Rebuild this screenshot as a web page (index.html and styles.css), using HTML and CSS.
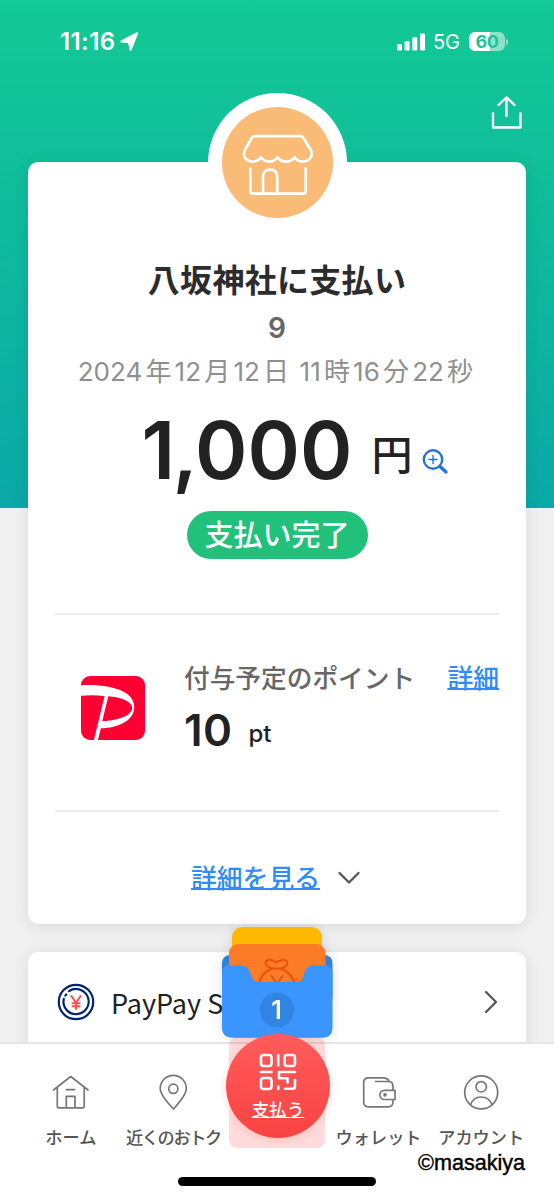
FILE: index.html
```html
<!DOCTYPE html>
<html lang="ja">
<head>
<meta charset="utf-8">
<title>支払い完了</title>
<link rel="stylesheet" href="styles.css">
</head>
<body>
<div class="app">
  <header class="status">
    <div class="status-left">
      <span class="time">11:16</span>
      <svg class="loc" width="19" height="20" viewBox="0 0 19 20"><path d="M17.2 1.2 L10.6 18 L9.2 11.2 Q9 10.4 8.200 10.300 L1.400 9.500 Z" fill="#fff" stroke="#fff" stroke-width="2" stroke-linejoin="round"/></svg>
    </div>
    <div class="status-right">
      <svg width="28" height="18" viewBox="0 0 28 18" fill="#fff"><rect x="0" y="11" width="5" height="6.500" rx="1.300"/><rect x="7.600" y="8" width="5" height="9.500" rx="1.300"/><rect x="15.300" y="4.200" width="5" height="13.300" rx="1.300"/><rect x="23" y="0.500" width="5" height="17" rx="1.300"/></svg>
      <span class="net">5G</span>
      <span class="battery"><span class="level">60</span></span>
      <span class="nub"></span>
    </div>
  </header>
  <div class="toolbar">
    <svg width="34" height="38" viewBox="489 94 34 38" fill="none" stroke="#fff" stroke-width="2.300" stroke-linecap="round" stroke-linejoin="round"><path d="M493 113.500V127.500H520.500V113.500M506.500 116V97.500M498.500 105L506.500 97.200L514.500 105"/></svg>
  </div>
  <main>
    <section class="card receipt">
      <div class="avatar">
        <svg width="111" height="111" viewBox="222 107 111 111" fill="none" stroke="#fff" stroke-width="2.700" stroke-linecap="round" stroke-linejoin="round">
          <circle cx="277.500" cy="162.500" r="55.500" fill="#f9bb76" stroke="none"/>
          <path d="M255 136.200H300.500Q302.300 136.200 303.200 137.800L310.500 149.500Q313.500 155 309.500 159Q306 162 301.500 161.500Q296.500 161 294.500 157.200Q291.500 161.600 286 161.600Q280.500 161.600 277.500 157.200Q274.500 161.600 269 161.600Q264 161.600 261 157.200Q258.500 161 253.500 161.500Q248 161.800 245.500 158.500Q242.500 154.500 245.200 149.500L251.800 137.800Q252.700 136.200 255 136.200Z"/>
          <path d="M250.300 168.500V191Q250.300 193.700 253 193.700H303Q305.700 193.700 305.700 191V168.500M263 193.500V177Q263 169.700 270 169.700Q277.200 169.700 277.200 177V193.500"/>
        </svg>
      </div>
      <h1 class="title">八坂神社に支払い</h1>
      <p class="serial">9</p>
      <p class="date">2024<span class="unit">年</span>12<span class="unit">月</span>12<span class="unit">日</span> 11<span class="unit">時</span>16<span class="unit">分</span>22<span class="unit">秒</span></p>
      <div class="amount">
        <span class="number"><span class="thousands">1,</span>000</span><span class="yen">円</span>
        <svg class="zoom" width="27" height="27" viewBox="0 0 27 27" fill="none" stroke="#2474d8" stroke-linecap="round"><circle cx="11" cy="11.500" r="9.200" stroke-width="2.400"/><path d="M18 18.500L24 24" stroke-width="3.300"/><path d="M11 7.500V15.500M7 11.500H15" stroke-width="1.400"/></svg>
      </div>
      <div class="pill">支払い完了</div>
      <div class="points">
        <svg class="paypay" width="64" height="64" viewBox="35 48 190 190">
          <rect x="35" y="48" width="190" height="190" rx="27" fill="#ff0033"/>
          <path fill="#fff" fill-rule="evenodd" d="M34 76C95 70 196 84 193 142C191 181 145 202 94 203L85 239H73L105 108Q70 103 34 107ZM116 108L98 182C142 181 186 166 187 143C187 123 151 110 116 108Z"/>
        </svg>
        <div class="points-body">
          <div class="points-head"><span class="points-label">付与予定のポイント</span><a class="link">詳細</a></div>
          <div class="points-value"><span class="points-number">10</span><span class="points-unit">pt</span></div>
        </div>
      </div>
      <div class="more">
        <a class="link">詳細を見る</a>
        <svg class="chevron" width="24" height="14" viewBox="0 0 24 14" fill="none" stroke="#555" stroke-width="2.300" stroke-linecap="round" stroke-linejoin="round"><path d="M2.500 2L12 11.500L21.500 2"/></svg>
      </div>
    </section>
    <section class="card step">
      <svg width="38" height="38" viewBox="0 0 38 38" fill="none" stroke="#002474" stroke-width="2.200">
        <circle cx="19" cy="19" r="17.200"/>
        <path d="M12 8.200A12.600 12.600 0 1 1 6.800 15.800" stroke-linecap="round"/><path d="M8.300 12.600L9.200 11.500" stroke-linecap="round"/>
        <path d="M14.400 13L19 19.700L23.600 13M19 19.700V26M15.500 20.300H22.500M15.500 23.200H22.500" stroke="#ff5055" stroke-width="2" stroke-linecap="round"/>
      </svg>
      <span class="step-label">PayPay S</span>
      <svg class="go" width="14" height="24" viewBox="0 0 14 24" fill="none" stroke="#555" stroke-width="2.300" stroke-linecap="round" stroke-linejoin="round"><path d="M2 2L12 12L2 22"/></svg>
    </section>
  </main>
  <nav class="tabs">
    <a class="tab">
      <svg width="38" height="36" viewBox="52 1073 38 36"><path d="M53.500 1089L70.700 1075.500L88 1089M57.300 1086.500V1105Q57.300 1106.800 59 1106.800H82.500Q84.200 1106.800 84.200 1105V1086.500M66.300 1106.500V1095.300H75V1106.500M66.500 1088.700H74.500"/></svg>
      <span class="tab-label">ホーム</span>
    </a>
    <a class="tab">
      <svg width="38" height="36" viewBox="154.500 1073 38 36"><path d="M174 1108Q160.700 1094 160.700 1087.500A12.900 12.900 0 0 1 186.800 1087.500Q186.800 1094 174 1108Z"/><circle cx="173.800" cy="1087.800" r="4.600"/></svg>
      <span class="tab-label tight">近くのおトク</span>
    </a>
    <div class="tab"></div>
    <a class="tab">
      <svg width="38" height="36" viewBox="360 1073 38 36"><path d="M393 1088.500V1086Q393 1080.500 389 1080.500H375.500M389.300 1080.500Q387.500 1076.800 383.500 1076.800H368.500Q363.700 1076.800 363.700 1081.500V1101Q363.700 1105.800 368.500 1105.800H388Q393 1105.800 393 1101V1098.500M395 1089.300H384.500A4.600 4.600 0 0 0 384.500 1098.500H395Z"/><circle cx="385" cy="1093.800" r="1" fill="#777"/></svg>
      <span class="tab-label">ウォレット</span>
    </a>
    <a class="tab">
      <svg width="38" height="36" viewBox="462 1073 38 36"><circle cx="481.200" cy="1091.400" r="16.500"/><circle cx="481.200" cy="1085.800" r="5.200"/><path d="M470.500 1103.700Q473.500 1096 481.200 1096Q489 1096 492 1103.700"/></svg>
      <span class="tab-label">アカウント</span>
    </a>
  </nav>
  <svg class="folder" width="112" height="114" viewBox="221 926 112 114">
    <rect x="222" y="955" width="110.500" height="50" rx="8" fill="#2f82dc"/>
    <rect x="232" y="927" width="90" height="50" rx="10" fill="#ffb800"/>
    <rect x="229" y="944" width="96.500" height="50" rx="9" fill="#fb7b26"/>
    <g fill="none" stroke="#e95309" stroke-width="2" stroke-linecap="round" stroke-linejoin="round"><path d="M271 968.500Q264 965 266 961.500Q269 957.500 276.500 962.500Q284 957.500 287 961.500Q289 965 282 968.500Z"/><path d="M272 968.500Q261 973 258.500 984M281 968.500Q292 973 295 984M271.500 976L277 983.500L282.500 976"/></g>
    <path d="M222 973Q222 965.500 228 965.500H241Q247 965.500 249 970L252.500 978.500Q254 982 258 982H297Q301 982 302.500 978.500L305.500 970Q307.500 965.500 313 965.500H326Q332.500 965.500 332.500 973V1027Q332.500 1037.700 322 1037.700H232.500Q222 1037.700 222 1027Z" fill="#3b95fe"/>
    <circle cx="277" cy="1010" r="17.200" fill="#3085e3"/>
    <text class="folder-count" x="276.500" y="1018.500">1</text>
  </svg>
  <div class="pay-halo"></div>
  <a class="pay">
    <svg width="38" height="38" viewBox="258.500 1053 38 38" fill="none" stroke="#fff" stroke-width="2.600" stroke-linejoin="round" stroke-linecap="round">
      <rect x="260.500" y="1055" width="10.500" height="11" rx="2.500"/><path d="M277.700 1055V1065.500"/><rect x="284" y="1055" width="10.500" height="11" rx="2.500"/>
      <path d="M260.500 1072H271"/><rect x="260.500" y="1078" width="10.500" height="11" rx="2.500"/>
      <path d="M294.500 1072H278.500V1078.200H287V1082.500M277.700 1086.500V1089M294.500 1080V1086.500Q294.500 1088.700 292 1088.700H284.500"/>
    </svg>
    <span class="pay-label">支払う</span>
  </a>
  <div class="home-bar"></div>
  <div class="credit">©masakiya</div>
</div>
</body>
</html>
```
FILE: styles.css
```css
* { box-sizing: border-box; }
body { margin: 0; font-family: Inter, "Noto Sans CJK JP", sans-serif; }
h1, p { margin: 0; }
svg { display: block; flex: none; }

.app {
  position: relative;
  display: flex;
  flex-direction: column;
  width: 554px;
  height: 1200px;
  overflow: hidden;
  background: #f0f0f0 linear-gradient(#13c994, #0ba8a7) no-repeat 0 0 / 100% 508px;
}

.status {
  display: flex;
  justify-content: space-between;
  height: 84px;
  padding: 0 46px 0 60px;
  color: #fff;
}
.status-left, .status-right { display: flex; align-items: center; height: 83px; }
.time { font-size: 24px; font-weight: 600; letter-spacing: 0.4px; }
.loc { margin-left: 5px; }
.net { margin-left: 8px; font-size: 20px; }
.battery {
  display: flex;
  justify-content: center;
  align-items: center;
  width: 36px;
  height: 19px;
  margin-left: 9px;
  border-radius: 6px;
  background: linear-gradient(90deg, #fff 21px, #8fe2ca 21px);
}
.level { color: #1fc39a; font-size: 18px; font-weight: 700; letter-spacing: -0.5px; }
.nub { width: 2px; height: 6px; margin-left: 1px; border-radius: 0 2px 2px 0; background: #8fe2ca; }

.toolbar { display: flex; justify-content: flex-end; height: 78px; padding: 10px 31px 0 0; }

main { display: flex; flex-direction: column; gap: 28px; padding: 0 28px; }
.card { border-radius: 10px; background: #fff; box-shadow: 0 2px 16px rgba(0, 0, 0, 0.09); }

.receipt { display: flex; flex-direction: column; align-items: center; height: 762px; }
.avatar {
  flex: none;
  width: 139px;
  height: 139px;
  margin-top: -69px;
  padding: 14px;
  border-radius: 50%;
  background: #fff;
}
.title {
  height: 48px;
  margin-top: 25px;
  color: #2c2c2e;
  font-size: 32px;
  font-weight: 700;
  line-height: 48px;
  letter-spacing: 0.3px;
}
.serial { height: 36px; margin-top: 5px; color: #666; font-size: 28px; font-weight: 600; line-height: 36px; }
.date {
  height: 40px;
  margin-top: 6px;
  color: #8f8f8f;
  font-size: 26px;
  font-weight: 400;
  line-height: 40px;
  white-space: nowrap;
}
.unit { margin: 0 3.2px; }
.amount { display: flex; align-items: flex-start; height: 94px; margin-top: 11px; margin-left: 37px; color: #222; }
.number { font-size: 79.5px; font-weight: 600; line-height: 94px; }
.thousands { letter-spacing: -2.7px; }
.yen { margin: 27px 0 0 19px; font-size: 41px; font-weight: 500; line-height: 50px; }
.zoom { margin: 45px 0 0 10px; }
.pill {
  width: 181px;
  height: 48px;
  margin-top: 14px;
  border-radius: 24px;
  background: #22c17b;
  color: #fff;
  font-size: 29px;
  font-weight: 500;
  line-height: 49px;
  text-align: center;
}
.points {
  display: flex;
  align-items: center;
  width: 444px;
  height: 199px;
  margin-top: 54px;
  padding-left: 26px;
  border-top: 2px solid #ededed;
  border-bottom: 2px solid #ededed;
}
.paypay { margin-bottom: 9px; }
.points-body { flex: 1; height: 108px; margin-left: 39px; }
.points-head { display: flex; justify-content: space-between; height: 40px; line-height: 40px; font-size: 25.7px; }
.points-label { color: #666; font-weight: 500; }
.link {
  color: #2f8cf8;
  font-size: 25.8px;
  font-weight: 500;
  text-decoration: underline;
  text-decoration-thickness: 1.5px;
  text-underline-offset: 0;
  text-decoration-skip-ink: none;
}
.points-value { display: flex; align-items: flex-start; margin-top: 4px; color: #222; font-weight: 600; }
.points-number { font-size: 44px; line-height: 54px; letter-spacing: 0.4px; }
.points-unit { margin: 16px 0 0 16px; font-size: 24px; line-height: 30px; font-weight: 500; }
.more { display: flex; align-items: center; gap: 17px; height: 50px; margin-top: 39px; margin-right: 2px; }
.chevron { margin-top: 3px; }

.step { display: flex; align-items: center; height: 112px; padding: 0 28px 12px 29px; }
.step-label { margin-left: 16px; color: #222; font-family: "Noto Sans CJK JP", sans-serif; font-size: 27px; }
.go { margin-left: auto; }

.tabs {
  position: absolute;
  inset: 1042px 0 0;
  display: grid;
  grid-template-columns: repeat(5, 102.6px);
  justify-content: center;
  padding: 30px 2px 0 0;
  border-top: 2px solid #e6e6e6;
  background: #fff;
}
.tab { display: flex; flex-direction: column; align-items: center; fill: none; stroke: #777; stroke-width: 1.7; stroke-linecap: round; stroke-linejoin: round; }
.tab-label { margin-top: 15px; color: #555; font-size: 17.2px; font-weight: 500; line-height: 26px; white-space: nowrap; }
.tight { letter-spacing: -1.4px; }

.folder { position: absolute; left: 221px; top: 926px; filter: drop-shadow(0 0 6px rgba(0, 0, 0, 0.12)); }
.folder-count { fill: #fff; font-size: 25px; font-weight: 600; text-anchor: middle; }
.pay-halo { position: absolute; left: 229px; top: 1037px; width: 96px; height: 111px; border-radius: 8px; background: rgba(255, 60, 60, 0.18); }
.pay {
  position: absolute;
  left: 226px;
  top: 1034px;
  display: flex;
  flex-direction: column;
  align-items: center;
  width: 104px;
  height: 104px;
  padding-top: 19px;
  border-radius: 50%;
  background: linear-gradient(#ff5c5c, #fa4242);
  box-shadow: 0 2px 8px rgba(255, 60, 60, 0.2);
}
.pay-label {
  margin-top: 6px;
  color: #fff;
  font-size: 17.5px;
  font-weight: 500;
  line-height: 26px;
  text-decoration: underline;
  text-underline-offset: 1px;
  text-decoration-skip-ink: none;
}
.home-bar { position: absolute; left: 178px; top: 1177px; width: 198px; height: 9px; border-radius: 5px; background: #000; }
.credit { position: absolute; left: 418px; top: 1151px; color: #000; font: 21.6px/24px "Liberation Sans", sans-serif; -webkit-text-stroke: 0.4px #000; }
```
